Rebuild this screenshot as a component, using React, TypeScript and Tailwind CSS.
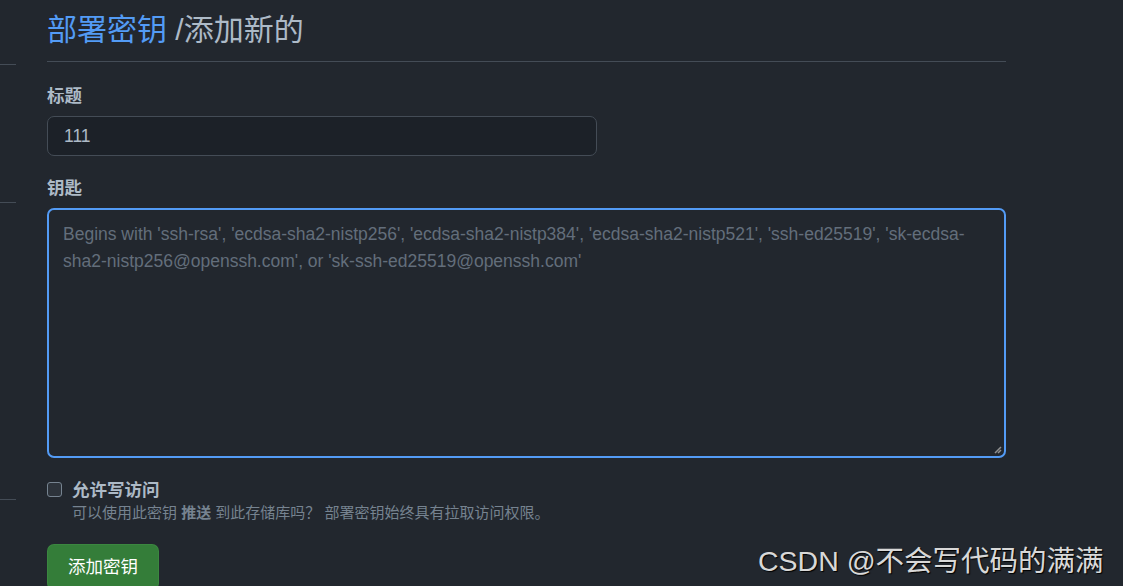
export default function App() {
  return (
    <div
      className="flex w-[1123px] h-[586px] overflow-hidden bg-[#22272e] text-[#adbac7]"
      style={{ fontFamily: '"Liberation Sans", "Noto Sans CJK SC", sans-serif' }}
    >
      {/* left nav edge */}
      <div className="flex flex-col w-[16px] shrink-0">
        <div className="h-[65px] shrink-0 border-b border-[#444c56]" />
        <div className="h-[138px] shrink-0 border-b border-[#444c56]" />
        <div className="h-[297px] shrink-0 border-b border-[#444c56]" />
      </div>

      <div className="ml-[31px] w-[959px] flex flex-col">
        <div className="h-[62px] shrink-0 border-b border-[#444c56] flex items-end pb-[11px]">
          <h2 className="text-[30px] leading-[40px] font-normal">
            <span className="text-[#539bf5]">部署密钥</span>
            <span className="text-[#adbac7]"> /添加新的</span>
          </h2>
        </div>

        <label className="shrink-0 mt-[23px] text-[17.5px] leading-[22px] font-bold text-[#adbac7]">标题</label>
        <div className="shrink-0 mt-[9px] w-[550px] h-[40px] rounded-[7px] border border-[#444c56] bg-[#1c2128] flex items-center px-[16px] text-[17.5px] text-[#adbac7]">
          111
        </div>

        <label className="shrink-0 mt-[21px] text-[17.5px] leading-[22px] font-bold text-[#adbac7]">钥匙</label>
        <div className="shrink-0 mt-[9px] h-[250px] rounded-[7px] border-2 border-[#539bf5] relative px-[14px] pt-[11px]">
          <p className="text-[17.5px] leading-[27px] text-[#636e7b]">
            Begins with 'ssh-rsa', 'ecdsa-sha2-nistp256', 'ecdsa-sha2-nistp384', 'ecdsa-sha2-nistp521', 'ssh-ed25519', 'sk-ecdsa-sha2-nistp256@openssh.com', or 'sk-ssh-ed25519@openssh.com'
          </p>
          <svg className="absolute right-[2px] bottom-[2px]" width="9" height="9" viewBox="0 0 9 9">
            <path d="M8 2 L2 8 M8 5 L5 8" stroke="#909090" strokeWidth="1.5" />
          </svg>
        </div>

        <div className="shrink-0 mt-[22px] flex items-start gap-[10px]">
          <div className="mt-[2px] w-[15px] h-[15px] rounded-[3px] border border-[#768390] bg-[#2d333b]" />
          <div className="flex flex-col">
            <span className="text-[17.5px] leading-[20px] font-bold text-[#adbac7]">允许写访问</span>
            <span className="mt-[4px] text-[15px] leading-[18px] text-[#768390]">
              可以使用此密钥 <b className="font-bold">推送</b> 到此存储库吗？ 部署密钥始终具有拉取访问权限。
            </span>
          </div>
        </div>

        <div className="shrink-0 mt-[22px] flex">
          <button className="w-[112px] h-[46px] rounded-[7px] bg-[#347d39] border border-[#46954a]/40 text-white text-[17.5px] leading-[44px] text-center">
            添加密钥
          </button>
        </div>
      </div>

      <div className="absolute left-[758px] top-[543px] text-[28.5px] leading-[36px] text-[#d8d8d8] [text-shadow:1px_1px_1px_#000]">
        CSDN @不会写代码的满满
      </div>
    </div>
  );
}
